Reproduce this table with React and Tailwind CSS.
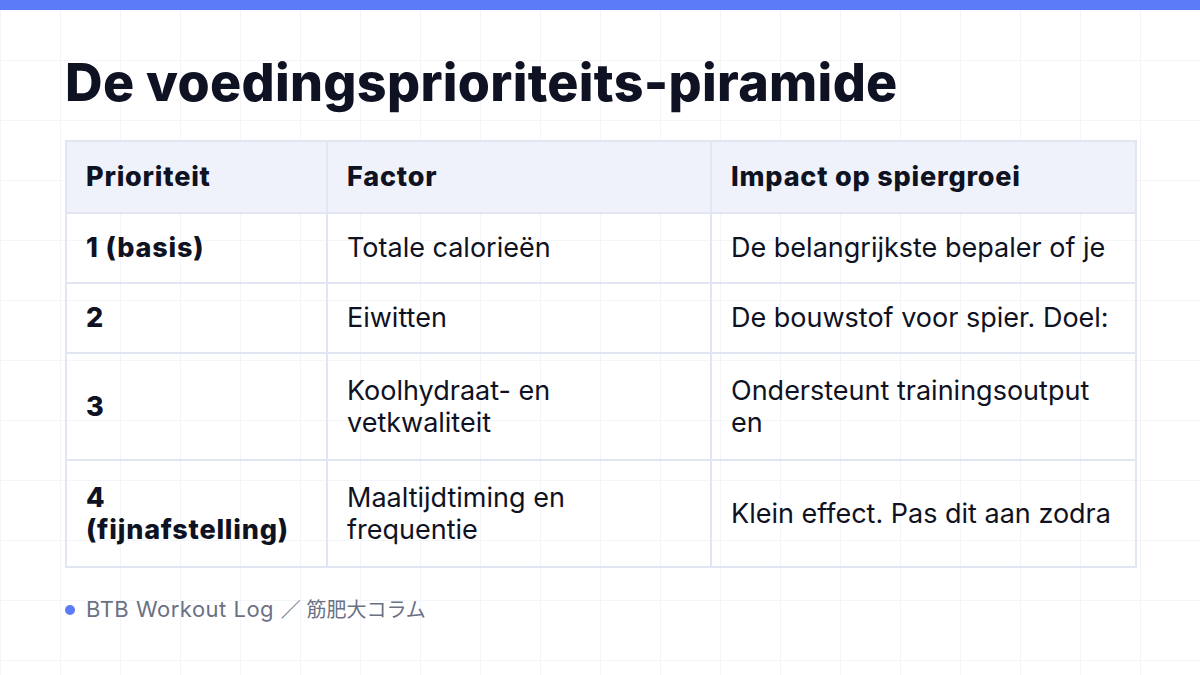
export default function App() {
  const rows = [
    { p: "1 (basis)", f: "Totale calorieën", i: "De belangrijkste bepaler of je" },
    { p: "2", f: "Eiwitten", i: "De bouwstof voor spier. Doel:" },
    { p: "3", f: "Koolhydraat- en vetkwaliteit", i: "Ondersteunt trainingsoutput en" },
    { p: "4 (fijnafstelling)", f: "Maaltijdtiming en frequentie", i: "Klein effect. Pas dit aan zodra" },
  ];
  return (
    <div
      className="w-[1200px] h-[675px] relative overflow-hidden bg-white bg-[linear-gradient(to_right,#f3f5f9_1px,transparent_1px),linear-gradient(to_bottom,#f3f5f9_1px,transparent_1px)] bg-[size:60px_60px]"
      style={{ fontFamily: "Inter, 'Noto Sans CJK JP', sans-serif" }}
    >
      <div className="h-[10px] bg-[#5b7cf6]" />
      <div className="px-[65px]">
        <h1 className="mt-[43px] text-[52px] leading-[60px] font-extrabold text-[#0f1222] tracking-[0.3px]">
          De voedingsprioriteits-piramide
        </h1>
        <table className="mt-[27px] w-[1070px] border-collapse border-2 border-[#e1e6f2] text-[27px] leading-[32px] text-[#0f1222] table-fixed">
          <colgroup>
            <col className="w-[261px]" />
            <col className="w-[384px]" />
            <col className="w-[425px]" />
          </colgroup>
          <thead>
            <tr className="bg-[#eff2fb] h-[72px]">
              <th className="border-2 border-[#e1e6f2] pl-[19px] pr-[20px] text-left font-extrabold tracking-[0.8px]">Prioriteit</th>
              <th className="border-2 border-[#e1e6f2] pl-[19px] pr-[20px] text-left font-extrabold tracking-[0.8px]">Factor</th>
              <th className="border-2 border-[#e1e6f2] pl-[19px] pr-[20px] text-left font-extrabold tracking-[0.8px]">Impact op spiergroei</th>
            </tr>
          </thead>
          <tbody>
            {rows.map((r, idx) => (
              <tr key={idx} className={idx < 2 ? "h-[70px]" : "h-[107px]"}>
                <td className="border-2 border-[#e1e6f2] pl-[19px] pr-[20px] font-extrabold tracking-[0.8px] align-middle">{r.p}</td>
                <td className="border-2 border-[#e1e6f2] pl-[19px] pr-[20px] align-middle">{r.f}</td>
                <td className="border-2 border-[#e1e6f2] pl-[19px] pr-[20px] align-middle">{r.i}</td>
              </tr>
            ))}
          </tbody>
        </table>
        <div className="mt-[26px] flex items-center gap-[11px] text-[22px] leading-[30px] text-[#6b7184]">
          <span className="w-[10px] h-[10px] rounded-full bg-[#5b7cf6]" />
          <span>
            <span className="tracking-[0.5px]">BTB Workout Log </span>
            <span className="text-[20px]">／ 筋肥大コラム</span>
          </span>
        </div>
      </div>
    </div>
  );
}
